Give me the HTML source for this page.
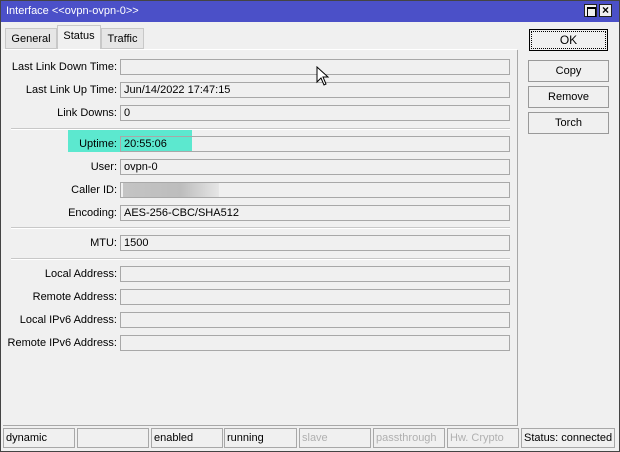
<!DOCTYPE html><html><head><style>
body{margin:0;width:620px;height:452px;overflow:hidden;background:#fff;font-family:"Liberation Sans",sans-serif;font-size:11px;color:#000}
.win{position:absolute;left:0;top:0;width:620px;height:452px;background:#f0f0f0}
.frame{position:absolute;left:0;top:0;width:620px;height:452px;border:1px solid #444;box-sizing:border-box;pointer-events:none}
.title{position:absolute;left:0;top:0;width:620px;height:22px;background:#4b50c8;color:#fff;font-size:11px;line-height:22px;padding-left:6px;box-sizing:border-box}
.tb{position:absolute;top:4px;width:13px;height:13px;background:#f0f0f0;border:1px solid #222;box-sizing:border-box}
.a{position:absolute}
.lbl{position:absolute;right:503px;text-align:right;white-space:nowrap;line-height:16px}
.fld{position:absolute;left:120px;width:390px;height:16px;border:1px solid #a8a8a8;box-sizing:border-box;line-height:14px;padding-left:3px;background:#f0f0f0}
.sep{position:absolute;left:11px;width:499px;height:1px;background:#c8c8c8;border-bottom:1px solid #fff}
.btn{position:absolute;left:528px;width:81px;height:22px;border:1px solid #999;box-sizing:border-box;text-align:center;line-height:20px;background:#f0f0f0}
.tab{position:absolute;top:28px;height:21px;line-height:20px;text-align:center;border:1px solid #c8c8c8;background:#e6e6e6;box-sizing:border-box}
.sc{position:absolute;top:428px;height:20px;border:1px solid #a8a8a8;box-sizing:border-box;line-height:18px;padding-left:2px;white-space:nowrap}
.dim{color:#b0b0b0}
</style></head><body><div class="win">
<div class="title">Interface &lt;&lt;ovpn-ovpn-0&gt;&gt;</div>
<div class="tb" style="left:584px"><div class="a" style="left:2px;top:2px;width:7px;height:7px;border:1px solid #000;border-top-width:2px"></div></div>
<div class="tb" style="left:599px;font-weight:bold;font-size:12px;line-height:11px;text-align:center">×</div>
<div class="tab" style="left:5px;width:52px">General</div>
<div class="tab" style="left:57px;top:25px;width:44px;height:25px;background:#f0f0f0;border-bottom:none">Status</div>
<div class="tab" style="left:101px;width:43px">Traffic</div>
<div class="a" style="left:3px;top:49px;width:514px;height:1px;background:#fff"></div>
<div class="a" style="left:517px;top:50px;width:1px;height:375px;background:#a8a8a8"></div>
<div class="a" style="left:3px;top:425px;width:515px;height:1px;background:#a8a8a8"></div>
<div class="a" style="left:68px;top:130px;width:124px;height:22px;background:#5ce8cf"></div>

<div class="lbl" style="top:59px">Last Link Down Time:</div><div class="fld" style="top:59px"></div>
<div class="lbl" style="top:82px">Last Link Up Time:</div><div class="fld" style="top:82px">Jun/14/2022 17:47:15</div>
<div class="lbl" style="top:105px">Link Downs:</div><div class="fld" style="top:105px">0</div>
<div class="sep" style="top:128px"></div>
<div class="lbl" style="top:136px">Uptime:</div><div class="fld" style="top:136px;background:transparent">20:55:06</div>
<div class="lbl" style="top:159px">User:</div><div class="fld" style="top:159px">ovpn-0</div>
<div class="lbl" style="top:182px">Caller ID:</div><div class="fld" style="top:182px"><div class="a" style="left:2px;top:0;width:96px;height:14px;background:linear-gradient(90deg,#c4c4c4,#bdbdbd 60%,#e6e6e6)"></div></div>
<div class="lbl" style="top:205px">Encoding:</div><div class="fld" style="top:205px">AES-256-CBC/SHA512</div>
<div class="sep" style="top:227px"></div>
<div class="lbl" style="top:235px">MTU:</div><div class="fld" style="top:235px">1500</div>
<div class="sep" style="top:258px"></div>
<div class="lbl" style="top:266px">Local Address:</div><div class="fld" style="top:266px"></div>
<div class="lbl" style="top:289px">Remote Address:</div><div class="fld" style="top:289px"></div>
<div class="lbl" style="top:312px">Local IPv6 Address:</div><div class="fld" style="top:312px"></div>
<div class="lbl" style="top:335px">Remote IPv6 Address:</div><div class="fld" style="top:335px"></div>

<div class="btn" style="top:29px;width:79px;left:529px;border:1px solid #000;outline:1px dotted #000;outline-offset:-3px;font-size:12px">OK</div>
<div class="btn" style="top:60px">Copy</div>
<div class="btn" style="top:86px">Remove</div>
<div class="btn" style="top:112px">Torch</div>

<svg class="a" style="left:316px;top:66px" width="14" height="20" viewBox="0 0 14 20"><path d="M1 1 L1 16 L5 12 L8 19 L10 18 L7 11 L12 11 Z" fill="#fff" stroke="#000" stroke-width="1"/></svg>

<div class="sc" style="left:3px;width:72px">dynamic</div>
<div class="sc" style="left:77px;width:72px"></div>
<div class="sc" style="left:151px;width:72px">enabled</div>
<div class="sc" style="left:224px;width:73px">running</div>
<div class="sc dim" style="left:299px;width:72px">slave</div>
<div class="sc dim" style="left:373px;width:72px">passthrough</div>
<div class="sc dim" style="left:447px;width:72px">Hw. Crypto</div>
<div class="sc" style="left:521px;width:94px">Status: connected</div>
</div><div class="frame"></div></body></html>
